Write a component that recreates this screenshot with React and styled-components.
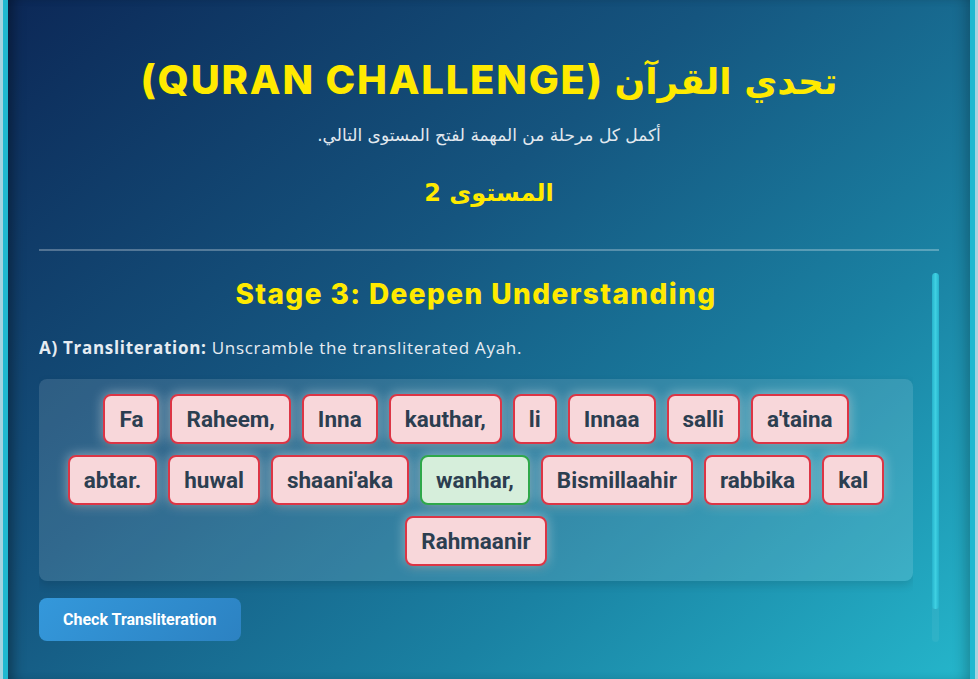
import React from 'react'
import styled, { createGlobalStyle } from 'styled-components'

const GlobalStyle = createGlobalStyle`
  html, body {
    margin: 0;
    padding: 0;
    background: #a3d3df;
    overflow: hidden;
  }
  * { box-sizing: border-box; }
`;

const Page = styled.div`
  height: 100vh;
  padding: 0 3px;
  background: #a3d3df;
`;

const Card = styled.div`
  height: 100%;
  border-left: 5px solid #1fb8d0;
  border-right: 5px solid #1fb8d0;
  background: linear-gradient(140deg, #0c2857 0%, #15557f 40%, #1a82a3 70%, #25b6cb 100%);
  box-shadow: inset 12px 0 14px -8px rgba(0, 0, 0, 0.4), inset -12px 0 14px -8px rgba(0, 0, 0, 0.25);
  padding: 56px 31px 0;
  font-family: 'Inter', 'DejaVu Sans', sans-serif;
`;

const Header = styled.header`
  text-align: center;
`;

const Title = styled.h1`
  margin: 0;
  height: 48px;
  font-size: 40px;
  line-height: 48px;
  font-weight: 800;
  letter-spacing: 1.8px;
  color: #ffea00;
`;

const ArabicPart = styled.span`
  font-family: 'DejaVu Sans', sans-serif;
  font-size: 36px;
  line-height: 1;
  font-weight: 700;
  letter-spacing: 0;
`;

const Subtitle = styled.p`
  margin: 19px 0 0;
  font-family: 'DejaVu Sans', sans-serif;
  font-size: 17px;
  line-height: 24px;
  color: #e3e9ef;
`;

const Level = styled.h2`
  margin: 30px 0 0;
  font-family: 'DejaVu Sans', sans-serif;
  font-size: 24px;
  line-height: 32px;
  font-weight: 700;
  color: #ffea00;
`;

const Divider = styled.hr`
  margin: 40px 0 0;
  border: none;
  height: 2px;
  background: rgba(255, 255, 255, 0.28);
`;

const StageArea = styled.section`
  margin-top: 22px;
  height: 369px;
  display: flex;
  gap: 19px;
`;

const StageContent = styled.div`
  flex: 1;
  min-width: 0;
  overflow: hidden;
  padding-top: 4px;
`;

const ScrollTrack = styled.div`
  width: 7px;
  border-radius: 4px;
  background: rgba(255, 255, 255, 0.05);
`;

const ScrollThumb = styled.div`
  height: 91%;
  border-radius: 4px;
  background: linear-gradient(90deg, #26b3cc, #3fd0e2 50%, #26b3cc);
`;

const StageTitle = styled.h3`
  margin: 0 0 25px;
  text-align: center;
  font-size: 28px;
  line-height: 34px;
  font-weight: 800;
  letter-spacing: 1.4px;
  color: #ffea00;
`;

const Prompt = styled.p`
  margin: 0;
  font-family: 'Open Sans', sans-serif;
  font-size: 17px;
  line-height: 24px;
  letter-spacing: 0.7px;
  color: #e6ecf2;

  strong { font-weight: 700; }
`;

const WordBox = styled.div`
  margin-top: 19px;
  padding: 15px;
  border-radius: 8px;
  background: rgba(255, 255, 255, 0.12);
  box-shadow: 0 4px 10px rgba(0, 0, 0, 0.12);
  display: flex;
  flex-wrap: wrap;
  justify-content: center;
  gap: 11px;
`;

const Chip = styled.button`
  height: 50px;
  padding: 0 14px;
  border-radius: 8px;
  border: 2px solid ${p => (p.$ok ? '#2ea84a' : '#dc3545')};
  background: ${p => (p.$ok ? '#d6eedb' : '#f8d7da')};
  color: #2c3e50;
  font-family: 'Roboto', sans-serif;
  font-size: 22.5px;
  font-weight: 700;
  box-shadow: 0 0 12px rgba(255, 255, 255, 0.5), 0 3px 6px rgba(0, 0, 0, 0.18);
  cursor: pointer;
`;

const CheckButton = styled.button`
  margin-top: 17px;
  height: 43px;
  padding: 0 24px;
  border: none;
  border-radius: 8px;
  background: linear-gradient(135deg, #3498db, #2c82c2);
  color: #fff;
  font-family: 'Roboto', sans-serif;
  font-size: 16px;
  font-weight: 700;
  cursor: pointer;
`;

const words = [
  'Fa', 'Raheem,', 'Inna', 'kauthar,', 'li', 'Innaa', 'salli', "a'taina",
  'abtar.', 'huwal', "shaani'aka", 'wanhar,', 'Bismillaahir', 'rabbika', 'kal',
  'Rahmaanir',
]

const App = () => {
  return (
    <Page>
      <GlobalStyle />
      <Card>
        <Header>
          <Title dir="ltr">(QURAN CHALLENGE) <ArabicPart>تحدي القرآن</ArabicPart></Title>
          <Subtitle dir="rtl">أكمل كل مرحلة من المهمة لفتح المستوى التالي.</Subtitle>
          <Level dir="rtl">المستوى 2</Level>
        </Header>
        <Divider />
        <StageArea>
          <StageContent>
            <StageTitle>Stage 3: Deepen Understanding</StageTitle>
            <Prompt>
              <strong>A) Transliteration:</strong> Unscramble the transliterated Ayah.
            </Prompt>
            <WordBox>
              {words.map(w => (
                <Chip key={w} $ok={w === 'wanhar,'}>{w}</Chip>
              ))}
            </WordBox>
            <CheckButton>Check Transliteration</CheckButton>
          </StageContent>
          <ScrollTrack>
            <ScrollThumb />
          </ScrollTrack>
        </StageArea>
      </Card>
    </Page>
  )
}

export default App
